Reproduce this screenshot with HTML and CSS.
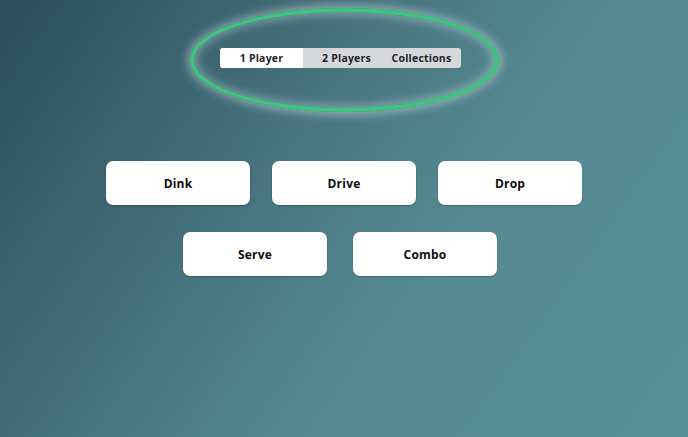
FILE: index.html
```html
<!DOCTYPE html>
<html>
<head>
<meta charset="utf-8">
<link rel="stylesheet" href="styles.css">
</head>
<body>
<div class="page">
  <header class="top">
    <div class="ring">
      <div class="tabs">
        <div class="tab active">1 Player</div>
        <div class="tab two">2 Players</div>
        <div class="tab three">Collections</div>
      </div>
    </div>
  </header>
  <main class="grid">
    <div class="row row1">
      <button class="card">Dink</button>
      <button class="card">Drive</button>
      <button class="card">Drop</button>
    </div>
    <div class="row row2">
      <button class="card">Serve</button>
      <button class="card">Combo</button>
    </div>
  </main>
</div>
</body>
</html>
```

FILE: styles.css
```css
html, body {
  margin: 0;
  padding: 0;
  height: 100%;
}
body {
  font-family: "Open Sans", "DejaVu Sans", sans-serif;
  background: linear-gradient(125deg, #2c4d5c 0%, #44707c 35%, #578a93 62%, #5a8f98 100%);
  overflow: hidden;
}
.page {
  width: 688px;
  height: 437px;
  display: flex;
  flex-direction: column;
  align-items: center;
}
.top {
  padding-top: 8px;
  display: flex;
  justify-content: center;
  width: 100%;
}
.ring {
  width: 301px;
  height: 96px;
  border: 4px solid #3ec47f;
  border-radius: 50%;
  box-shadow: 0 0 10px 3px rgba(210, 235, 225, 0.5), inset 0 0 10px 3px rgba(210, 235, 225, 0.4);
  display: flex;
  align-items: center;
  justify-content: center;
}
.tabs {
  display: flex;
  width: 241px;
  height: 20px;
  background: #d6d8dc;
  border-radius: 3px;
  overflow: hidden;
  margin-left: -7px;
  margin-bottom: 4px;
  font-size: 10.5px;
  font-weight: 700;
  color: #1e2328;
}
.tab {
  display: flex;
  align-items: center;
  justify-content: center;
  letter-spacing: 0.2px;
}
.tab.active {
  width: 83px;
  background: #ffffff;
}
.tab.two {
  width: 87px;
}
.tab.three {
  flex: 1;
  padding-right: 8px;
}
.grid {
  margin-top: 49px;
  display: flex;
  flex-direction: column;
  align-items: center;
  gap: 27px;
}
.row {
  display: flex;
}
.row1 {
  gap: 22px;
}
.row2 {
  gap: 26px;
  margin-right: 8px;
}
.card {
  width: 144px;
  height: 44px;
  border: none;
  border-radius: 7px;
  background: #ffffff;
  box-shadow: 0 1px 2px rgba(0, 0, 0, 0.25);
  font-family: "Open Sans", "DejaVu Sans", sans-serif;
  font-size: 12px;
  font-weight: 700;
  color: #0d0d0d;
  letter-spacing: 0.2px;
  padding: 0;
}
```
